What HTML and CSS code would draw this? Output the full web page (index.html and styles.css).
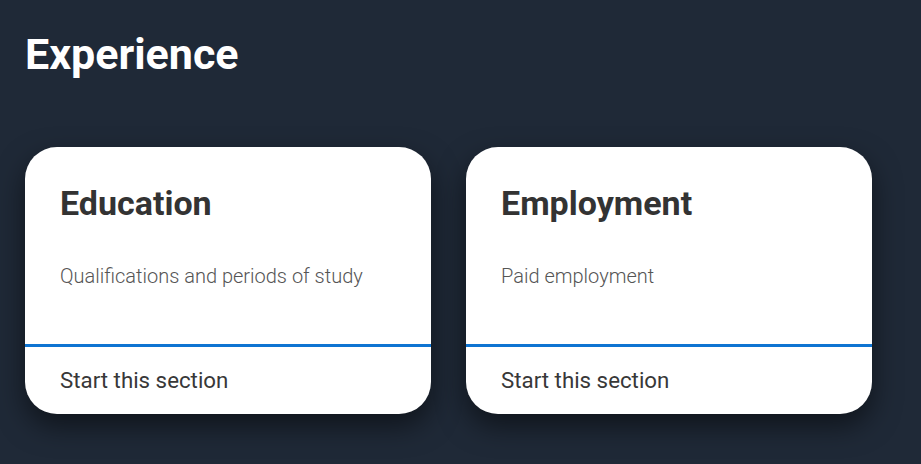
FILE: index.html
```html
<!DOCTYPE html>
<html lang="en">
<head>
    <meta charset="UTF-8">
    <meta name="viewport" content="width=device-width, initial-scale=1.0">
    <title>Experience</title>
    <link rel="stylesheet" href="styles.css">
</head>
<body>
    <h1 class="page-title">Experience</h1>
    <div class="cards">
        <div class="card">
            <div class="card-body">
                <h2 class="card-title">Education</h2>
                <p class="card-text">Qualifications and periods of study</p>
            </div>
            <div class="card-footer">Start this section</div>
        </div>
        <div class="card">
            <div class="card-body">
                <h2 class="card-title">Employment</h2>
                <p class="card-text">Paid employment</p>
            </div>
            <div class="card-footer">Start this section</div>
        </div>
    </div>
</body>
</html>
```

FILE: styles.css
```css
body {
    margin: 0;
    padding: 0 25px;
    background: #1f2937;
    font-family: Roboto, "Liberation Sans", sans-serif;
    height: 464px;
    overflow: hidden;
}
.page-title {
    color: #fff;
    font-size: 43px;
    font-weight: 700;
    margin: 0;
    padding-top: 29px;
    line-height: 50px;
}
.cards {
    display: flex;
    gap: 35px;
    margin-top: 68px;
}
.card {
    width: 406px;
    height: 267px;
    background: #fff;
    border-radius: 32px;
    overflow: hidden;
    display: flex;
    flex-direction: column;
    box-shadow: 0 12px 28px rgba(0, 0, 0, 0.5);
}
.card-body {
    height: 197px;
    padding: 0 35px;
    border-bottom: 3px solid #0e74d2;
}
.card-title {
    margin: 0;
    padding-top: 36px;
    font-size: 34px;
    font-weight: 700;
    line-height: 40px;
    color: #333;
}
.card-text {
    margin: 0;
    padding-top: 39px;
    font-size: 20px;
    font-weight: 300;
    line-height: 28px;
    color: #555;
}
.card-footer {
    padding: 18px 35px 0;
    font-size: 22.3px;
    line-height: 30px;
    color: #383838;
}
```
